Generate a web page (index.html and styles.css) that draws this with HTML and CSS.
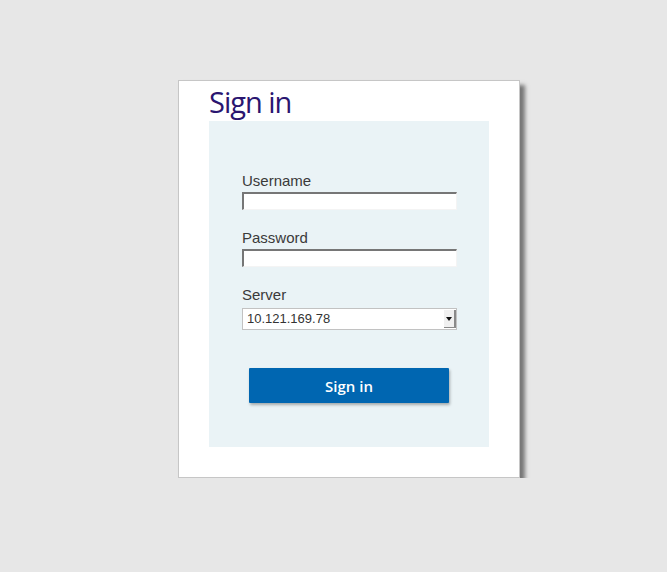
FILE: index.html
```html
<!DOCTYPE html>
<html lang="en">
<head>
    <meta charset="UTF-8">
    <title>Sign in</title>
    <link rel="stylesheet" href="styles.css">
</head>
<body>
    <div class="card">
        <h1 class="title">Sign in</h1>
        <div class="panel">
            <label class="label" for="username">Username</label>
            <input class="field" type="text" id="username">
            <label class="label" for="password">Password</label>
            <input class="field" type="password" id="password">
            <label class="label">Server</label>
            <div class="select">
                <span class="select-value">10.121.169.78</span>
                <span class="select-arrow"><span class="tri"></span></span>
            </div>
            <button class="signin-btn">Sign in</button>
        </div>
    </div>
</body>
</html>
```

FILE: styles.css
```css
body {
    margin: 0;
    background-color: #e7e7e7;
    font-family: "Liberation Sans", Arial, sans-serif;
}
.card {
    margin: 80px 0 0 178px;
    width: 310px;
    height: 396px;
    padding: 0 0 0 30px;
    background-color: #fff;
    border: 1px solid #c6c6c6;
    box-shadow: 5px 5px 4px #777;
}
.title {
    margin: 0;
    height: 40px;
    font-family: "Open Sans", sans-serif;
    font-weight: 400;
    font-size: 29px;
    line-height: 42px;
    color: #2a1570;
    letter-spacing: -1px;
}
.panel {
    width: 247px;
    height: 275px;
    padding: 51px 0 0 33px;
    background-color: #eaf3f6;
}
.label {
    display: block;
    font-size: 15px;
    line-height: 18px;
    color: #3a3a3a;
    margin-bottom: 2px;
}
.field {
    display: block;
    box-sizing: border-box;
    width: 215px;
    height: 18px;
    margin: 0 0 19px 0;
    padding: 0;
    background: #fff;
    border-style: solid;
    border-width: 2px 1px 1px 2px;
    border-color: #767676 #f4f4f4 #f4f4f4 #767676;
    outline: none;
}
.select {
    display: flex;
    box-sizing: border-box;
    width: 215px;
    height: 22px;
    margin-top: 4px;
    background: #fff;
    border: 1px solid #c2c2c2;
}
.select-value {
    flex: 1;
    padding-left: 4px;
    font-size: 13px;
    line-height: 20px;
    color: #333;
}
.select-arrow {
    display: flex;
    align-items: center;
    justify-content: center;
    width: 10px;
    margin: 1px 0;
    background: #f0f0f0;
    border-right: 2px solid #8a8a8a;
    border-bottom: 1px solid #8a8a8a;
}
.tri {
    width: 0;
    height: 0;
    border-left: 3px solid transparent;
    border-right: 3px solid transparent;
    border-top: 4px solid #111;
}
.signin-btn {
    display: block;
    width: 200px;
    height: 35px;
    margin: 38px 0 0 7px;
    background-color: #0066b1;
    color: #fff;
    border: none;
    border-radius: 1px;
    box-shadow: 1px 2px 3px rgba(0, 0, 0, 0.3);
    font-family: "Open Sans", sans-serif;
    font-weight: 600;
    font-size: 15px;
    cursor: pointer;
}
```
